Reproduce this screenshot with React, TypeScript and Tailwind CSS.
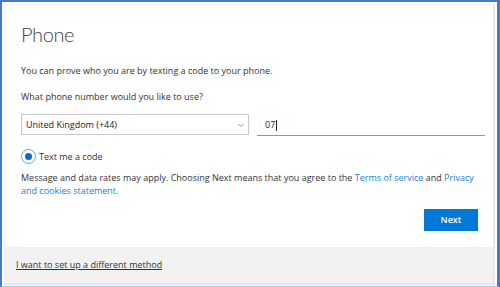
import React from 'react';

const App: React.FC = () => {
  return (
    <div
      className="w-[500px] h-[287px] bg-white border-l-2 border-t-2 border-r-[3px] border-b border-[#4a76cc] border-b-[#a9c1ec] overflow-hidden"
      style={{ fontFamily: '"Open Sans", "Liberation Sans", sans-serif' }}
    >
      <div className="pt-[2px] pl-[2px] pr-[2px] h-full flex flex-col">
        <div className="flex-1 flex flex-col border-r-2 border-b-2 border-[#e6e6e6] border-t border-l border-t-[#f0f0f0] border-l-[#f0f0f0]">
          {/* main body */}
          <div className="flex-1 bg-white pl-[16px] pr-[8px] pt-[16px]">
            <h1
              className="text-[20px] font-light text-[#444] leading-[26px] tracking-[-0.4px]"
              style={{ fontFamily: 'Lato, "Open Sans", sans-serif' }}
            >
              Phone
            </h1>
            <p className="mt-[17px] text-[9px] text-[#333] leading-[14px]">
              You can prove who you are by texting a code to your phone.
            </p>
            <p className="mt-[12px] text-[9px] text-[#333] leading-[14px]">
              What phone number would you like to use?
            </p>

            <div className="mt-[10px] flex items-center gap-[8px]">
              <div className="w-[228px] h-[21px] border border-[#c8c8c8] flex items-center justify-between pl-[4px] pr-[3px]">
                <span className="text-[9px] text-[#222]">United Kingdom (+44)</span>
                <svg width="8" height="8" viewBox="0 0 8 8" className="text-[#777]">
                  <path d="M1.5 3 L4 5.5 L6.5 3" fill="none" stroke="currentColor" strokeWidth="0.8" />
                </svg>
              </div>
              <div className="w-[228px] h-[21px] border-b border-[#5aa5e6] flex items-center pl-[8px] translate-y-[1px]">
                <span className="text-[9px] text-[#222]">07</span>
                <span className="w-px h-[11px] bg-[#222] ml-[1px]" />
              </div>
            </div>

            <div className="mt-[14px] flex items-center gap-[3px]">
              <span className="w-[15px] h-[15px] rounded-full border border-[#5aa5e6] flex items-center justify-center">
                <span className="w-[7px] h-[7px] rounded-full bg-[#0a6cc7]" />
              </span>
              <span className="text-[9px] text-[#333]">Text me a code</span>
            </div>

            <p className="mt-[7px] text-[9px] text-[#333] leading-[13px]">
              Message and data rates may apply. Choosing Next means that you agree to the{' '}
              <span className="text-[#1b7fd6]">Terms of service</span> and{' '}
              <span className="text-[#1b7fd6]">Privacy and cookies statement.</span>
            </p>

            <div className="mt-[12px] pr-[7px] flex justify-end">
              <button className="w-[54px] h-[22px] bg-[#0078d7] text-white text-[9px] font-semibold">
                Next
              </button>
            </div>
          </div>

          {/* footer */}
          <div className="h-[36px] bg-[#f2f2f2] flex items-center pl-[11px]">
            <span className="text-[9px] text-[#333] underline">I want to set up a different method</span>
          </div>
        </div>
        <div className="h-px" />
      </div>
    </div>
  );
};

export default App;
